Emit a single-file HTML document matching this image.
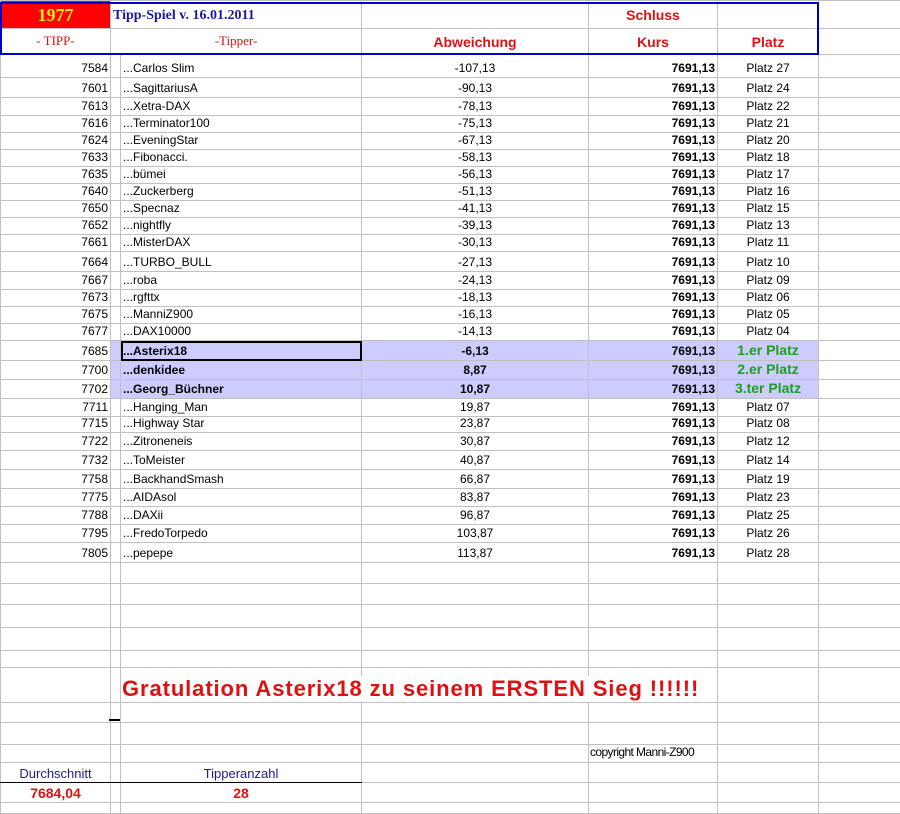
<!DOCTYPE html>
<html><head><meta charset="utf-8"><style>
body{margin:0;background:#fff;width:900px;height:813px;overflow:hidden;position:relative;font-family:"Liberation Sans",Arial,sans-serif;font-size:12px;color:#000}
table{border-collapse:collapse;table-layout:fixed;width:900px;position:absolute;left:0;top:0}
td{border:1px solid #c0c0c0;padding:0 2px 2px 2px;vertical-align:bottom;white-space:nowrap;overflow:visible;line-height:13px}
td.r{text-align:right}
td.c{text-align:center}
td.b{font-weight:bold}
tr.hl td.h{background:#ccccff}
.g{color:#1aa01a;font-weight:bold;font-size:14px}
.box{position:absolute;left:0;top:2px;width:815px;height:49px;border:2px solid #0000cc;border-top-width:2px}
.ov{position:absolute;white-space:nowrap}
</style></head><body>
<table>
<colgroup><col style="width:110px"><col style="width:10px"><col style="width:241px"><col style="width:227px"><col style="width:129px"><col style="width:101px"><col style="width:82px"></colgroup>
<tr style="height:28px">
<td style="background:#ff0000;color:#ffee00;font:bold 18px 'Liberation Serif',serif;text-align:center;vertical-align:middle;padding-top:4px">1977</td>
<td colspan="2" style="color:#1a1aa0;font:bold 14px 'Liberation Serif',serif;vertical-align:middle;padding-top:4px">Tipp-Spiel v. 16.01.2011</td>
<td></td>
<td class="c" style="color:#dd1111;font-weight:bold;font-size:14px;vertical-align:middle;padding-top:4px">Schluss</td>
<td></td><td></td></tr>
<tr style="height:26px">
<td class="c" style="color:#dd1111;font:13px 'Liberation Serif',serif;padding-bottom:5px">- TIPP-</td>
<td colspan="2" class="c" style="color:#dd1111;font:13px 'Liberation Serif',serif;padding-bottom:5px">-Tipper-</td>
<td class="c" style="color:#dd1111;font-weight:bold;font-size:14px;padding-bottom:5px">Abweichung</td>
<td class="c" style="color:#dd1111;font-weight:bold;font-size:14px;padding-bottom:5px">Kurs</td>
<td class="c" style="color:#dd1111;font-weight:bold;font-size:14px;padding-bottom:5px">Platz</td><td></td></tr>
<tr style="height:23px"><td class="r">7584</td><td></td><td>...Carlos Slim</td><td class="c">-107,13</td><td class="r b">7691,13</td><td class="c">Platz 27</td><td></td></tr>
<tr style="height:20px"><td class="r">7601</td><td></td><td>...SagittariusA</td><td class="c">-90,13</td><td class="r b">7691,13</td><td class="c">Platz 24</td><td></td></tr>
<tr style="height:18px"><td class="r">7613</td><td></td><td>...Xetra-DAX</td><td class="c">-78,13</td><td class="r b">7691,13</td><td class="c">Platz 22</td><td></td></tr>
<tr style="height:17px"><td class="r">7616</td><td></td><td>...Terminator100</td><td class="c">-75,13</td><td class="r b">7691,13</td><td class="c">Platz 21</td><td></td></tr>
<tr style="height:17px"><td class="r">7624</td><td></td><td>...EveningStar</td><td class="c">-67,13</td><td class="r b">7691,13</td><td class="c">Platz 20</td><td></td></tr>
<tr style="height:17px"><td class="r">7633</td><td></td><td>...Fibonacci.</td><td class="c">-58,13</td><td class="r b">7691,13</td><td class="c">Platz 18</td><td></td></tr>
<tr style="height:17px"><td class="r">7635</td><td></td><td>...bümei</td><td class="c">-56,13</td><td class="r b">7691,13</td><td class="c">Platz 17</td><td></td></tr>
<tr style="height:17px"><td class="r">7640</td><td></td><td>...Zuckerberg</td><td class="c">-51,13</td><td class="r b">7691,13</td><td class="c">Platz 16</td><td></td></tr>
<tr style="height:17px"><td class="r">7650</td><td></td><td>...Specnaz</td><td class="c">-41,13</td><td class="r b">7691,13</td><td class="c">Platz 15</td><td></td></tr>
<tr style="height:17px"><td class="r">7652</td><td></td><td>...nightfly</td><td class="c">-39,13</td><td class="r b">7691,13</td><td class="c">Platz 13</td><td></td></tr>
<tr style="height:17px"><td class="r">7661</td><td></td><td>...MisterDAX</td><td class="c">-30,13</td><td class="r b">7691,13</td><td class="c">Platz 11</td><td></td></tr>
<tr style="height:20px"><td class="r">7664</td><td></td><td>...TURBO_BULL</td><td class="c">-27,13</td><td class="r b">7691,13</td><td class="c">Platz 10</td><td></td></tr>
<tr style="height:18px"><td class="r">7667</td><td></td><td>...roba</td><td class="c">-24,13</td><td class="r b">7691,13</td><td class="c">Platz 09</td><td></td></tr>
<tr style="height:17px"><td class="r">7673</td><td></td><td>...rgfttx</td><td class="c">-18,13</td><td class="r b">7691,13</td><td class="c">Platz 06</td><td></td></tr>
<tr style="height:17px"><td class="r">7675</td><td></td><td>...ManniZ900</td><td class="c">-16,13</td><td class="r b">7691,13</td><td class="c">Platz 05</td><td></td></tr>
<tr style="height:17px"><td class="r">7677</td><td></td><td>...DAX10000</td><td class="c">-14,13</td><td class="r b">7691,13</td><td class="c">Platz 04</td><td></td></tr>
<tr class="hl" style="height:20px"><td class="r">7685</td><td class="h"></td><td class="h b" style="outline:2px solid #000;outline-offset:-2px">...Asterix18</td><td class="c b h">-6,13</td><td class="r b h">7691,13</td><td class="c h"><span class="g">1.er Platz</span></td><td></td></tr>
<tr class="hl" style="height:19px"><td class="r">7700</td><td class="h"></td><td class="h b">...denkidee</td><td class="c b h">8,87</td><td class="r b h">7691,13</td><td class="c h"><span class="g">2.er Platz</span></td><td></td></tr>
<tr class="hl" style="height:19px"><td class="r">7702</td><td class="h"></td><td class="h b">...Georg_Büchner</td><td class="c b h">10,87</td><td class="r b h">7691,13</td><td class="c h"><span class="g">3.ter Platz</span></td><td></td></tr>
<tr style="height:18px"><td class="r">7711</td><td></td><td>...Hanging_Man</td><td class="c">19,87</td><td class="r b">7691,13</td><td class="c">Platz 07</td><td></td></tr>
<tr style="height:16px"><td class="r">7715</td><td></td><td>...Highway Star</td><td class="c">23,87</td><td class="r b">7691,13</td><td class="c">Platz 08</td><td></td></tr>
<tr style="height:18px"><td class="r">7722</td><td></td><td>...Zitroneneis</td><td class="c">30,87</td><td class="r b">7691,13</td><td class="c">Platz 12</td><td></td></tr>
<tr style="height:19px"><td class="r">7732</td><td></td><td>...ToMeister</td><td class="c">40,87</td><td class="r b">7691,13</td><td class="c">Platz 14</td><td></td></tr>
<tr style="height:19px"><td class="r">7758</td><td></td><td>...BackhandSmash</td><td class="c">66,87</td><td class="r b">7691,13</td><td class="c">Platz 19</td><td></td></tr>
<tr style="height:18px"><td class="r">7775</td><td></td><td>...AIDAsol</td><td class="c">83,87</td><td class="r b">7691,13</td><td class="c">Platz 23</td><td></td></tr>
<tr style="height:18px"><td class="r">7788</td><td></td><td>...DAXii</td><td class="c">96,87</td><td class="r b">7691,13</td><td class="c">Platz 25</td><td></td></tr>
<tr style="height:18px"><td class="r">7795</td><td></td><td>...FredoTorpedo</td><td class="c">103,87</td><td class="r b">7691,13</td><td class="c">Platz 26</td><td></td></tr>
<tr style="height:20px"><td class="r">7805</td><td></td><td>...pepepe</td><td class="c">113,87</td><td class="r b">7691,13</td><td class="c">Platz 28</td><td></td></tr>
<tr style="height:21px"><td></td><td></td><td></td><td></td><td></td><td></td><td></td></tr>
<tr style="height:21px"><td></td><td></td><td></td><td></td><td></td><td></td><td></td></tr>
<tr style="height:23px"><td></td><td></td><td></td><td></td><td></td><td></td><td></td></tr>
<tr style="height:23px"><td></td><td></td><td></td><td></td><td></td><td></td><td></td></tr>
<tr style="height:17px"><td></td><td></td><td></td><td></td><td></td><td></td><td></td></tr>
<tr style="height:35px"><td></td><td></td><td></td><td></td><td></td><td></td><td></td></tr>
<tr style="height:20px"><td></td><td></td><td></td><td></td><td></td><td></td><td></td></tr>
<tr style="height:22px"><td></td><td></td><td></td><td></td><td></td><td></td><td></td></tr>
<tr style="height:18px"><td></td><td></td><td></td><td></td><td></td><td></td><td></td></tr>
<tr style="height:20px"><td style="color:#1a1aa0;font-size:13px;text-align:center;border-bottom:1px solid #000">Durchschnitt</td><td style="border-bottom:1px solid #000"></td><td class="c" style="color:#1a1aa0;font-size:13px;border-bottom:1px solid #000">Tipperanzahl</td><td></td><td></td><td></td><td></td></tr>
<tr style="height:20px"><td class="c" style="color:#e01010;font-weight:bold;font-size:14px">7684,04</td><td></td><td class="c" style="color:#e01010;font-weight:bold;font-size:14px">28</td><td></td><td></td><td></td><td></td></tr>
<tr style="height:11px"><td></td><td></td><td></td><td></td><td></td><td></td><td></td></tr>
</table>
<div class="box"></div>
<div class="ov" style="left:122px;top:676px;color:#e01010;font-weight:bold;font-size:22px;letter-spacing:0.9px;background:#fff;line-height:26px">Gratulation Asterix18 zu seinem ERSTEN Sieg !!!!!!</div>
<div class="ov" style="left:590px;top:745px;font-size:12px;letter-spacing:-0.6px;background:#fff;line-height:14px">copyright Manni-Z900</div>
<div style="position:absolute;left:109px;top:719px;width:11px;height:2px;background:#000"></div>
</body></html>
